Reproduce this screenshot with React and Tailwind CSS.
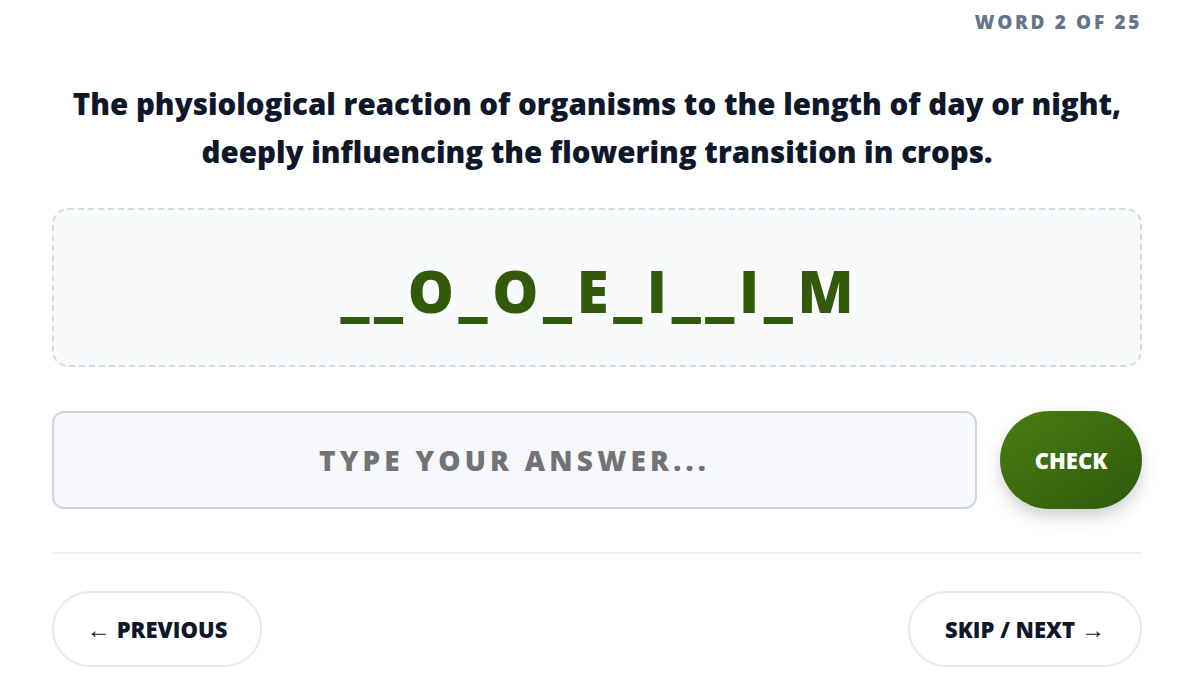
export default function App() {
  const font = { fontFamily: '"Open Sans", "Noto Sans", sans-serif' };
  return (
    <div className="w-[1200px] h-[675px] bg-white overflow-hidden" style={font}>
      <div className="flex flex-col px-[52px] pr-[58px]">
        <div className="flex justify-end pt-[10px] h-[40px]">
          <span className="text-[19px] font-extrabold tracking-[0.14em] text-[#64748b] leading-[24px] mr-[0px]">
            WORD 2 OF 25
          </span>
        </div>
        <h1 className="mt-[40px] text-center text-[29.5px] font-extrabold leading-[48px] text-[#0f172a]">
          The physiological reaction of organisms to the length of day or night,
          <br />
          deeply influencing the flowering transition in crops.
        </h1>
        <div className="mt-[32px] h-[159px] rounded-2xl border-2 border-dashed border-[#d5dbe3] bg-[#f8fafc] flex items-center justify-center">
          <span className="text-[58px] font-extrabold tracking-[0.08em] text-[#325a0a] leading-none pl-[0.08em] mt-[6px]">
            __O_O_E_I__I_M
          </span>
        </div>
        <div className="mt-[44px] flex items-center gap-[23px]">
          <div className="flex-1 h-[98px] rounded-xl border-2 border-[#cfd6e2] bg-[#f6f8fb] flex items-center justify-center">
            <span className="text-[28px] font-extrabold tracking-[0.15em] text-[#737373]">
              TYPE YOUR ANSWER...
            </span>
          </div>
          <button className="w-[142px] h-[98px] rounded-full bg-gradient-to-br from-[#4b7c12] to-[#2e5a0b] shadow-[0_8px_16px_rgba(0,0,0,0.18)] flex items-center justify-center">
            <span className="text-[22px] font-extrabold text-white">CHECK</span>
          </button>
        </div>
        <div className="mt-[43px] h-[2px] bg-[#f0f1f3]" />
        <div className="mt-[37px] flex justify-between">
          <button className="w-[210px] h-[76px] rounded-full border-2 border-[#e8eaee] bg-white flex items-center justify-center text-[22px] font-extrabold text-[#0f172a]">
            <span className="font-normal mr-[6px] text-[24px]">←</span>PREVIOUS
          </button>
          <button className="w-[234px] h-[76px] rounded-full border-2 border-[#e8eaee] bg-white flex items-center justify-center text-[22px] font-extrabold text-[#0f172a]">
            SKIP / NEXT<span className="font-normal ml-[6px] text-[24px]">→</span>
          </button>
        </div>
      </div>
    </div>
  );
}
